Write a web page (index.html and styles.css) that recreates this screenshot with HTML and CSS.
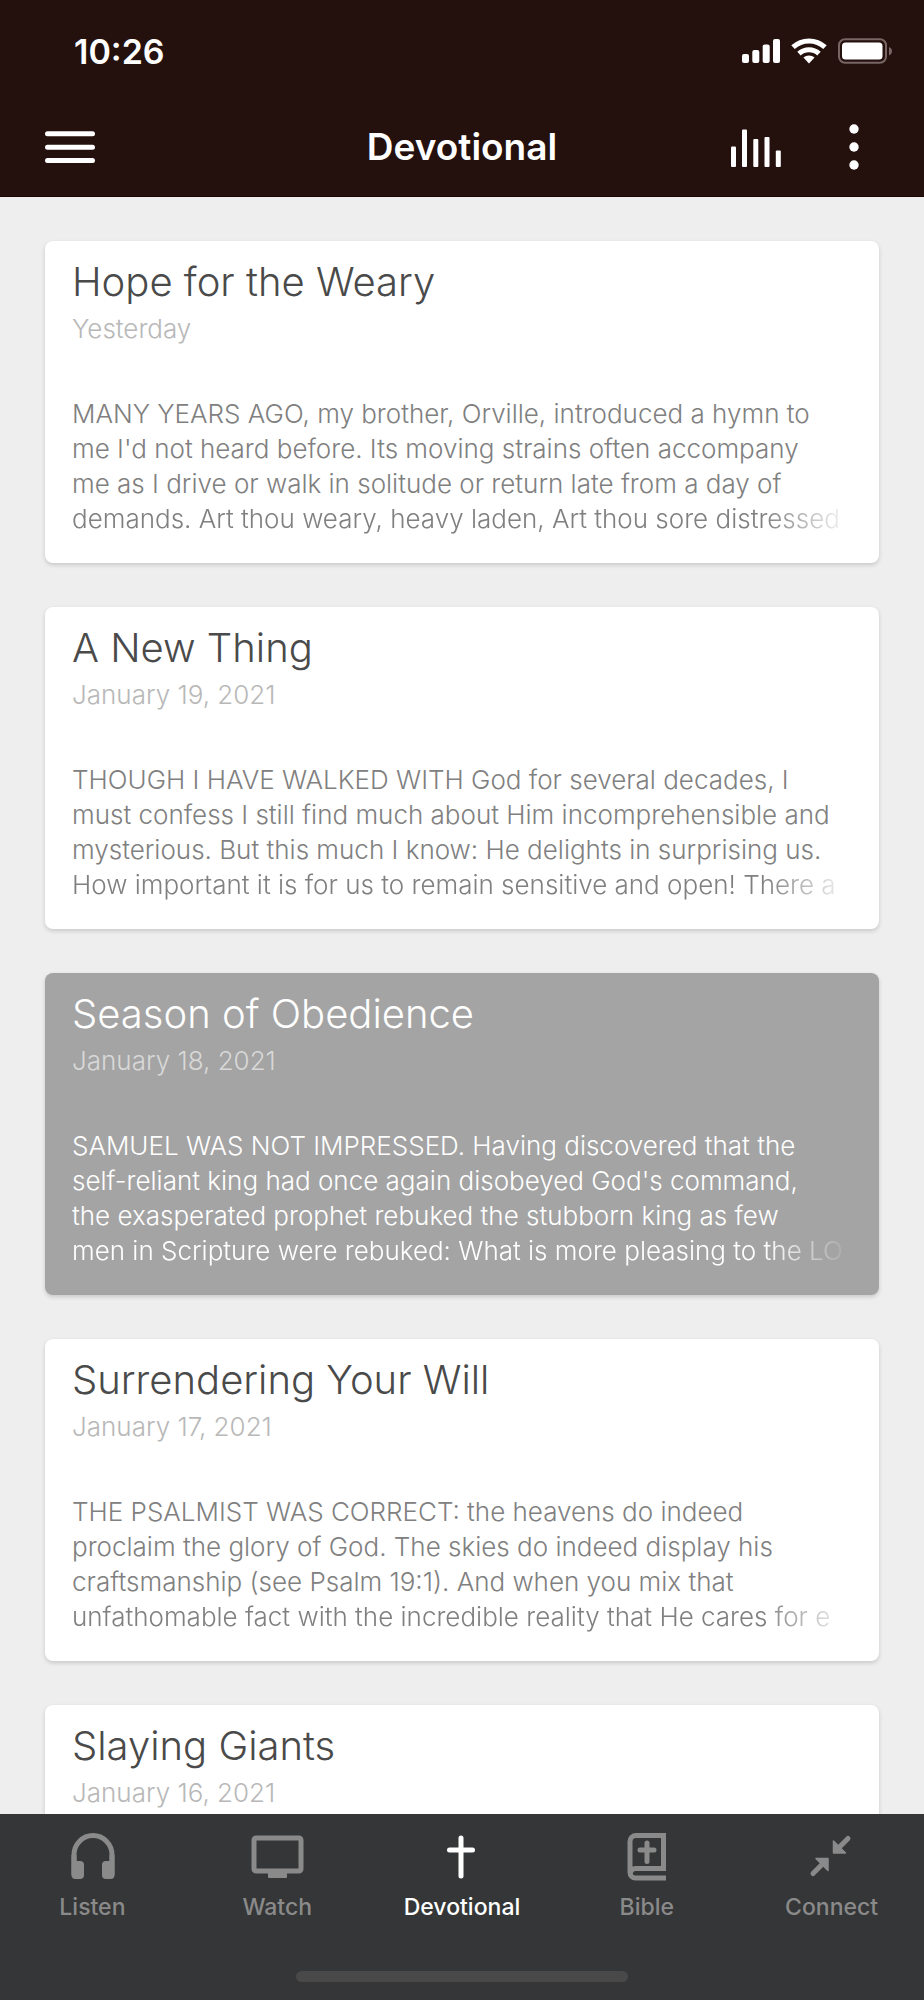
FILE: index.html
```html
<!DOCTYPE html>
<html lang="en">
<head>
    <meta charset="UTF-8">
    <meta name="viewport" content="width=device-width, initial-scale=1.0">
    <link rel="stylesheet" href="styles.css">
    <title>Devotional</title>
</head>
<body>
    <header class="header">
        <div class="status-bar">
            <span class="time">10:26</span>
            <div class="status-icons">
                <svg width="38" height="26" viewBox="0 0 38 26" fill="#fff">
                    <rect x="0" y="16" width="7" height="9" rx="2"/>
                    <rect x="10.3" y="12" width="7" height="13" rx="2"/>
                    <rect x="20.7" y="6.5" width="7" height="18.5" rx="2"/>
                    <rect x="31" y="1" width="7" height="24" rx="2"/>
                </svg>
                <svg width="36" height="26" viewBox="0 0 36 26" fill="none" stroke="#fff" stroke-width="5">
                    <path d="M2 9.2a23.5 23.5 0 0 1 32 0"/>
                    <path d="M8 15.6a14.8 14.8 0 0 1 20 0"/>
                    <path d="M12.4 19.6a8.5 8.5 0 0 1 11.2 0L18 25.4z" fill="#fff" stroke="none"/>
                </svg>
                <svg width="54" height="26" viewBox="0 0 54 26">
                    <rect x="1" y="1.2" width="47" height="23.6" rx="6" fill="none" stroke="#776664" stroke-width="2"/>
                    <rect x="4" y="4.5" width="40.5" height="17" rx="3.5" fill="#fff"/>
                    <path d="M51 9c1.8 .6 3 2.2 3 4.2s-1.2 3.6-3 4.2z" fill="#776664"/>
                </svg>
            </div>
        </div>
        <div class="nav-bar">
            <button class="icon-button" aria-label="Menu">
                <svg width="50" height="32" viewBox="0 0 50 32" stroke="#fff" stroke-width="5" stroke-linecap="round">
                    <path d="M2.5 2.8h45M2.5 16.2h45M2.5 29.5h45"/>
                </svg>
            </button>
            <h1>Devotional</h1>
            <div class="actions">
                <button class="icon-button" aria-label="Audio">
                    <svg width="50" height="42" viewBox="0 0 50 42" fill="#fff">
                        <rect x="0" y="20.5" width="5" height="20.5" rx="1"/>
                        <rect x="11" y="3.5" width="5" height="37.5" rx="1"/>
                        <rect x="22.3" y="13" width="5" height="28" rx="1"/>
                        <rect x="33.5" y="11" width="5" height="30" rx="1"/>
                        <rect x="44.8" y="24.5" width="5" height="16.5" rx="1"/>
                    </svg>
                </button>
                <button class="icon-button" aria-label="More">
                    <svg width="10" height="46" viewBox="0 0 10 46" fill="#fff">
                        <circle cx="5" cy="5" r="4.7"/>
                        <circle cx="5" cy="23" r="4.7"/>
                        <circle cx="5" cy="41" r="4.7"/>
                    </svg>
                </button>
            </div>
        </div>
    </header>

    <main class="list">
        <article class="card">
            <h2>Hope for the Weary</h2>
            <p class="date">Yesterday</p>
            <p class="excerpt">MANY YEARS AGO, my brother, Orville, introduced a hymn to<br>
                me I'd not heard before. Its moving strains often accompany<br>
                me as I drive or walk in solitude or return late from a day of
                <span class="fade">demands. Art thou weary, heavy laden, Art thou sore distressed</span></p>
        </article>
        <article class="card">
            <h2>A New Thing</h2>
            <p class="date">January 19, 2021</p>
            <p class="excerpt">THOUGH I HAVE WALKED WITH God for several decades, I<br>
                must confess I still find much about Him incomprehensible and<br>
                mysterious. But this much I know: He delights in surprising us.
                <span class="fade">How important it is for us to remain sensitive and open! There a</span></p>
        </article>
        <article class="card selected">
            <h2>Season of Obedience</h2>
            <p class="date">January 18, 2021</p>
            <p class="excerpt">SAMUEL WAS NOT IMPRESSED. Having discovered that the<br>
                self-reliant king had once again disobeyed God's command,<br>
                the exasperated prophet rebuked the stubborn king as few
                <span class="fade">men in Scripture were rebuked: What is more pleasing to the LO</span></p>
        </article>
        <article class="card">
            <h2>Surrendering Your Will</h2>
            <p class="date">January 17, 2021</p>
            <p class="excerpt">THE PSALMIST WAS CORRECT: the heavens do indeed<br>
                proclaim the glory of God. The skies do indeed display his<br>
                craftsmanship (see Psalm 19:1). And when you mix that
                <span class="fade">unfathomable fact with the incredible reality that He cares for e</span></p>
        </article>
        <article class="card">
            <h2>Slaying Giants</h2>
            <p class="date">January 16, 2021</p>
        </article>
    </main>

    <footer class="footer">
        <nav class="tabs">
            <a class="tab" href="#">
                <svg width="54" height="48" viewBox="-1 0 54 48">
                    <path d="M8 30V22a19 19.5 0 0 1 38 0v8" fill="none" stroke="currentColor" stroke-width="5"/>
                    <rect x="5.5" y="28" width="12.5" height="18" rx="4" fill="currentColor"/>
                    <rect x="36" y="28" width="12.5" height="18" rx="4" fill="currentColor"/>
                    <path d="M5.5 22h5v20h-5zM43.5 22h5v20h-5z" fill="currentColor"/>
                </svg>
                <span>Listen</span>
            </a>
            <a class="tab" href="#">
                <svg width="54" height="48" viewBox="0 0 54 48">
                    <rect x="4" y="5" width="47" height="33" rx="2" fill="none" stroke="currentColor" stroke-width="5"/>
                    <path d="M18 38h19v6q0 1-1 1h-17q-1 0-1-1z" fill="currentColor"/>
                </svg>
                <span>Watch</span>
            </a>
            <a class="tab active" href="#">
                <svg width="54" height="48" viewBox="1 0 54 48" fill="none" stroke="currentColor" stroke-width="5" stroke-linecap="round">
                    <path d="M27 5v38M15.5 17h23"/>
                </svg>
                <span>Devotional</span>
            </a>
            <a class="tab" href="#">
                <svg width="54" height="48" viewBox="1 0 54 48" fill="none" stroke="currentColor" stroke-width="5">
                    <path d="M47 45H16.5a5.5 5.5 0 0 1-5.5-5.5V8.500a6 6 0 0 1 6-6h27.5v33H16.5a5 5 0 0 0-5 5"/>
                    <path d="M28 10v18.5M21 17h14" stroke-linecap="round"/>
                </svg>
                <span>Bible</span>
            </a>
            <a class="tab" href="#">
                <svg width="54" height="48" viewBox="1 0 54 48" fill="currentColor" stroke="currentColor">
                    <path d="M44 5.5L34 15.5M9 40.5L19 30.5" stroke-width="5" stroke-linecap="round"/>
                    <path d="M29.5 8v12h12zM12 25.500h12v12z" stroke-width="1.5" stroke-linejoin="round"/>
                </svg>
                <span>Connect</span>
            </a>
        </nav>
        <div class="home-indicator"></div>
    </footer>
</body>
</html>
```
FILE: styles.css
```css
* {
    box-sizing: border-box;
}

body {
    margin: 0;
    height: 100vh;
    display: flex;
    flex-direction: column;
    background-color: #eee;
    font-family: Inter, "Liberation Sans", sans-serif;
}

h1, h2, p {
    margin: 0;
}

svg {
    display: block;
}

/* top bar */
.header {
    flex: none;
    background-color: #24110e;
    border-bottom: 1px solid #1a0505;
    color: #fff;
}

.status-bar {
    display: flex;
    justify-content: space-between;
    align-items: center;
    height: 102px;
    padding: 0 32px 0 74px;
}

.time {
    font-size: 34px;
    font-weight: 600;
}

.status-icons {
    display: flex;
    gap: 11px;
}

.nav-bar {
    display: grid;
    grid-template-columns: 1fr auto 1fr;
    align-items: center;
    height: 94px;
    padding: 0 45px 4px;
}

.nav-bar h1 {
    font-size: 37px;
    font-weight: 600;
    line-height: 44px;
}

.icon-button {
    padding: 0;
    border: 0;
    background: none;
    cursor: pointer;
    justify-self: start;
}

.actions {
    display: flex;
    justify-content: flex-end;
    align-items: center;
    gap: 68px;
    padding-right: 20px;
}

/* devotional cards */
.list {
    flex: 1;
    min-height: 0;
    overflow: hidden;
    padding: 44px 45px 0;
}

.card {
    min-height: 322px;
    margin-bottom: 44px;
    padding: 16px 27px 27px;
    border-radius: 8px;
    background-color: #fff;
    box-shadow: 0 2px 4px rgba(0, 0, 0, 0.16);
    color: #808080;
    font-size: 26px;
    font-weight: 300;
    line-height: 35px;
}

.card h2 {
    margin-bottom: 4px;
    color: #4a4a4a;
    font-size: 40px;
    font-weight: 300;
    line-height: 50px;
}

.date {
    margin-bottom: 50px;
    color: #b8b8b8;
}

.excerpt {
    overflow: hidden;
    white-space: nowrap;
}

.fade {
    display: block;
    overflow: hidden;
    -webkit-mask-image: linear-gradient(to left, transparent, #000 88px);
    mask-image: linear-gradient(to left, transparent, #000 88px);
}

.selected {
    background-color: #a4a4a4;
    color: #fff;
}

.selected h2 {
    color: #fff;
}

.selected .date {
    color: #d8d8d8;
}

/* bottom tabs */
.footer {
    flex: none;
    height: 186px;
    padding: 19px 0 18px;
    display: flex;
    flex-direction: column;
    justify-content: space-between;
    align-items: center;
    background-color: #353637;
}

.tabs {
    display: grid;
    grid-template-columns: repeat(5, 1fr);
    width: 100%;
}

.tab {
    display: flex;
    flex-direction: column;
    align-items: center;
    gap: 12px;
    color: #8a8a8a;
    font-size: 23px;
    font-weight: 500;
    line-height: 28px;
    text-decoration: none;
}

.active {
    color: #fff;
}

.home-indicator {
    width: 36%;
    height: 11px;
    border-radius: 6px;
    background-color: #494949;
}
```
